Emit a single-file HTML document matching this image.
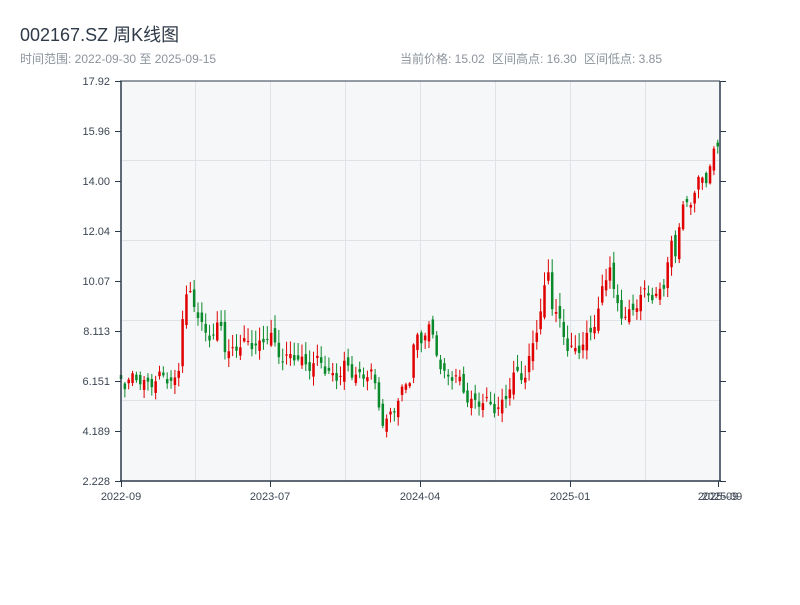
<!DOCTYPE html>
<html><head><meta charset="utf-8"><style>
body{margin:0;background:#fff;width:800px;height:600px;overflow:hidden;font-family:"Liberation Sans","Noto Sans CJK SC",sans-serif}
</style></head><body>
<svg id="s" width="800" height="600" xmlns="http://www.w3.org/2000/svg" font-family="Liberation Sans, Noto Sans CJK SC, sans-serif">
<text x="20" y="41" font-size="18" fill="#2f3a48">002167.SZ 周K线图</text>
<text x="20" y="63" font-size="12" fill="#8c939c">时间范围: 2022-09-30 至 2025-09-15</text>
<text x="400" y="63" font-size="12" fill="#8c939c">当前价格: 15.02</text>
<text x="492" y="63" font-size="12" fill="#8c939c">区间高点: 16.30</text>
<text x="584" y="63" font-size="12" fill="#8c939c">区间低点: 3.85</text>
<rect x="121" y="81" width="599" height="400" fill="#f5f7f9"/>
<g stroke="#dfe3e8" stroke-width="1">
<line x1="195.5" y1="81" x2="195.5" y2="481"/><line x1="270.5" y1="81" x2="270.5" y2="481"/><line x1="345.5" y1="81" x2="345.5" y2="481"/><line x1="420.5" y1="81" x2="420.5" y2="481"/><line x1="495.5" y1="81" x2="495.5" y2="481"/><line x1="570.5" y1="81" x2="570.5" y2="481"/><line x1="645.5" y1="81" x2="645.5" y2="481"/>
<line x1="121" y1="160.5" x2="720" y2="160.5"/><line x1="121" y1="240.5" x2="720" y2="240.5"/><line x1="121" y1="320.5" x2="720" y2="320.5"/><line x1="121" y1="400.5" x2="720" y2="400.5"/>
</g>
<g id="c"></g>
<g stroke="#2b3a4a" stroke-width="1.5" fill="none">
<line x1="121" y1="81" x2="121" y2="482"/><line x1="120" y1="481" x2="721" y2="481"/><line x1="720" y1="81" x2="720" y2="481"/>
<line x1="120" y1="81" x2="720" y2="81" stroke-width="1"/>
</g>
<g id="tk" stroke="#2b3a4a" stroke-width="1"></g>
<g font-size="11" fill="#3c4654" text-anchor="end">
<text x="110" y="85">17.92</text><text x="110" y="135">15.96</text><text x="110" y="185">14.00</text><text x="110" y="235">12.04</text><text x="110" y="285">10.07</text><text x="110" y="335">8.113</text><text x="110" y="385">6.151</text><text x="110" y="435">4.189</text><text x="110" y="485">2.228</text>
</g>
<g font-size="11" fill="#3c4654" text-anchor="middle">
<text x="121" y="500">2022-09</text><text x="270" y="500">2023-07</text><text x="420" y="500">2024-04</text><text x="570" y="500">2025-01</text><text x="718" y="500">2025-09</text><text x="722" y="500">2025-09</text>
</g>
</svg>
<script>
(function(){
var ns="http://www.w3.org/2000/svg";
function el(p,n,a){var e=document.createElementNS(ns,n);for(var k in a)e.setAttribute(k,a[k]);p.appendChild(e);return e;}
var tk=document.getElementById("tk");
[81,131,181,231,281,331,381,431,481].forEach(function(y){el(tk,"line",{x1:115,y1:y+.5,x2:121,y2:y+.5});el(tk,"line",{x1:720,y1:y+.5,x2:726,y2:y+.5});});
[121,270,420,570,718].forEach(function(x){el(tk,"line",{x1:x+.5,y1:481,x2:x+.5,y2:487});});
var kp=[[121,375],[125,382],[160,380],[178,378],[182,318],[188,295],[195,305],[200,318],[207,335],[215,340],[220,320],[226,350],[240,348],[255,340],[262,345],[270,335],[276,350],[290,358],[300,362],[320,362],[326,375],[340,372],[345,366],[352,376],[365,373],[370,368],[376,395],[384,428],[390,410],[400,400],[410,378],[415,330],[420,340],[428,330],[435,345],[442,370],[458,382],[467,395],[480,405],[495,405],[505,402],[515,375],[525,372],[535,340],[542,308],[548,265],[552,300],[560,325],[568,352],[578,345],[590,338],[597,318],[603,283],[610,262],[615,305],[622,318],[632,308],[640,298],[655,295],[665,282],[670,245],[676,262],[681,200],[690,205],[697,183],[705,185],[711,155],[716,145],[720,150]];
function iy(x){for(var i=1;i<kp.length;i++){if(x<=kp[i][0]){var a=kp[i-1],b=kp[i];return a[1]+(b[1]-a[1])*(x-a[0])/(b[0]-a[0]);}}return 150;}
var c=document.getElementById("c");var prev=375;
for(var i=0;i<156;i++){var x=121+i*3.85;var cl=iy(x)+Math.sin(i*1.7)*5+Math.cos(i*0.9)*4;var op=prev+Math.sin(i*2.3)*6;
var up=cl<op;var col=up?"#e00000":"#0a8a2a";var by=Math.min(cl,op),bb=Math.max(cl,op);
var hi=by-1-Math.abs(Math.sin(i*3.1))*12,lo=bb+1+Math.abs(Math.cos(i*2.7))*8;
el(c,"line",{x1:x,y1:hi,x2:x,y2:lo,stroke:col,"stroke-width":1});
el(c,"rect",{x:x-1.25,y:by,width:2.5,height:Math.max(1,bb-by),fill:col});
prev=cl;}
})();
</script>
</body></html>
